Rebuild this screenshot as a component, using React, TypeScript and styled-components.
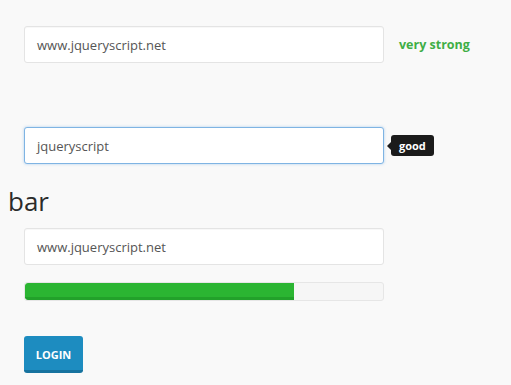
import React from "react";
import styled, { createGlobalStyle } from "styled-components";

const Global = createGlobalStyle`
  html, body { margin: 0; padding: 0; background: #f9f9f9; }
  body { font-family: "Open Sans", "Liberation Sans", sans-serif; color: #333; }
`;

const Page = styled.div`
  padding-top: 26px;
  display: flex;
  flex-direction: column;
  align-items: flex-start;
`;

const Row = styled.div<{ $mt?: number }>`
  display: flex;
  align-items: center;
  margin-left: 24px;
  margin-top: ${(p) => p.$mt ?? 0}px;
`;

const Input = styled.div<{ $focus?: boolean }>`
  box-sizing: border-box;
  width: 360px;
  height: 37px;
  background: #fff;
  border: 1px solid ${(p) => (p.$focus ? "#7fb4e3" : "#e4e4e4")};
  border-radius: 3px;
  box-shadow: ${(p) =>
    p.$focus ? "0 0 3px rgba(110, 170, 230, 0.55)" : "inset 0 1px 1px rgba(0,0,0,0.03)"};
  padding: 0 12px;
  display: flex;
  align-items: center;
  font-size: 13px;
  color: #555;
`;

const Strength = styled.span`
  margin-left: 15px;
  font-size: 12.5px;
  font-weight: 700;
  color: #3fae46;
`;

const Tip = styled.div`
  position: relative;
  margin-left: 7px;
  height: 21px;
  padding: 0 8px;
  background: #1b1b1b;
  border-radius: 3px;
  color: #fff;
  font-size: 11px;
  font-weight: 700;
  display: flex;
  align-items: center;
  &::before {
    content: "";
    position: absolute;
    left: -4px;
    top: 50%;
    margin-top: -4px;
    border-style: solid;
    border-width: 4px 4px 4px 0;
    border-color: transparent #1b1b1b transparent transparent;
  }
`;

const Heading = styled.h2`
  margin: 17px 0 0 8px;
  font-size: 26px;
  font-weight: 400;
  color: #2b2b2b;
  line-height: 41px;
`;

const Track = styled.div`
  box-sizing: border-box;
  margin: 17px 0 0 24px;
  width: 360px;
  height: 19px;
  background: #f6f6f6;
  border: 1px solid #e6e6e6;
  border-radius: 3px;
  overflow: hidden;
`;

const Fill = styled.div`
  box-sizing: border-box;
  height: 100%;
  background: #2bb532;
  border-bottom: 3px solid #22a12a;
  border-radius: 3px 0 0 3px;
`;

const Button = styled.button`
  box-sizing: border-box;
  margin: 35px 0 0 24px;
  width: 59px;
  height: 37px;
  background: #1d8cc0;
  border: none;
  border-bottom: 3px solid #17739f;
  border-radius: 3px;
  color: #fff;
  font-family: "Open Sans", "Liberation Sans", sans-serif;
  font-size: 11px;
  font-weight: 700;
  padding: 3px 0 0;
`;

export default function App() {
  const progress = 75;
  return (
    <>
      <Global />
      <Page>
        <Row>
          <Input>www.jqueryscript.net</Input>
          <Strength>very strong</Strength>
        </Row>
        <Row $mt={64}>
          <Input $focus>jqueryscript</Input>
          <Tip>good</Tip>
        </Row>
        <Heading>bar</Heading>
        <Row $mt={6}>
          <Input>www.jqueryscript.net</Input>
        </Row>
        <Track>
          <Fill style={{ width: `${progress}%` }} />
        </Track>
        <Button>LOGIN</Button>
      </Page>
    </>
  );
}
